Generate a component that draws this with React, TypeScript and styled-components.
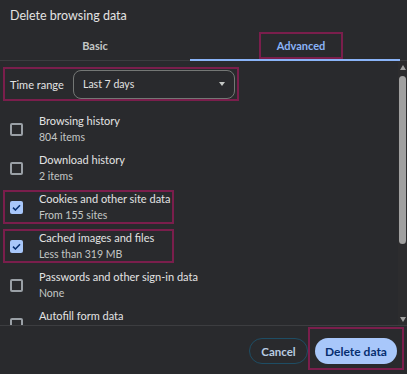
import styled, { createGlobalStyle } from "styled-components";

const GlobalStyle = createGlobalStyle`
  html, body {
    margin: 0;
    padding: 0;
    background: #292a2d;
  }
  body {
    font-family: Lato, "Noto Sans", sans-serif;
  }
`;

type Entry = {
  title: string;
  detail: string;
  checked: boolean;
  marked?: boolean;
};

const entries: Entry[] = [
  { title: "Browsing history", detail: "804 items", checked: false },
  { title: "Download history", detail: "2 items", checked: false },
  { title: "Cookies and other site data", detail: "From 155 sites", checked: true, marked: true },
  { title: "Cached images and files", detail: "Less than 319 MB", checked: true, marked: true },
  { title: "Passwords and other sign-in data", detail: "None", checked: false },
  { title: "Autofill form data", detail: "\u00a0", checked: false },
];

function CheckIcon() {
  return (
    <svg width="9" height="7" viewBox="0 0 9 7">
      <path d="M1 3.6 L3.4 6 L8 1.2" fill="none" stroke="#062e6f" strokeWidth="1.5" />
    </svg>
  );
}

export default function App() {
  return (
    <>
      <GlobalStyle />
      <Dialog>
        <Title>Delete browsing data</Title>
        <TabBar>
          <Tab>Basic</Tab>
          <Tab active>
            <Mark>Advanced</Mark>
          </Tab>
        </TabBar>
        <Body>
          <Content>
            <RangeRow>
              <RangeLabel>Time range</RangeLabel>
              <Select>
                <span>Last 7 days</span>
                <Caret />
              </Select>
            </RangeRow>
            <List>
              {entries.map((e) => (
                <Item key={e.title} marked={e.marked}>
                  <Box checked={e.checked}>{e.checked && <CheckIcon />}</Box>
                  <ItemText>
                    <ItemTitle>{e.title}</ItemTitle>
                    <ItemDetail>{e.detail}</ItemDetail>
                  </ItemText>
                </Item>
              ))}
            </List>
          </Content>
          <Scrollbar>
            <Arrow />
            <Thumb />
            <Spacer />
            <Arrow down />
          </Scrollbar>
        </Body>
        <Footer>
          <CancelButton>Cancel</CancelButton>
          <ButtonMark>
            <DeleteButton>Delete data</DeleteButton>
          </ButtonMark>
        </Footer>
      </Dialog>
    </>
  );
}

const maroon = "#7a1e4c";

const Dialog = styled.div`
  width: 407px;
  height: 374px;
  display: flex;
  flex-direction: column;
  background: #292a2d;
  overflow: hidden;
`;

const Title = styled.div`
  height: 30px;
  line-height: 31px;
  padding-left: 10px;
  font-size: 12.5px;
  color: #e3e3e3;
`;

const TabBar = styled.div`
  display: grid;
  grid-template-columns: 190px 210px;
  height: 30px;
  border-bottom: 1px solid #3c3d40;
`;

const Tab = styled.div<{ active?: boolean }>`
  display: flex;
  align-items: center;
  justify-content: center;
  padding-left: ${(p) => (p.active ? "12px" : "0")};
  font-size: 11px;
  font-weight: 700;
  color: ${(p) => (p.active ? "#8ab4f8" : "#c4c7c5")};
  border-bottom: 2px solid ${(p) => (p.active ? "#8ab4f8" : "transparent")};
  margin-bottom: -1px;
  padding-top: 1px;
`;

const Mark = styled.span`
  display: flex;
  align-items: center;
  justify-content: center;
  width: 80px;
  height: 23px;
  border: 2px solid ${maroon};
`;

const Body = styled.div`
  display: flex;
  height: 264px;
`;

const Content = styled.div`
  flex: 1;
  overflow: hidden;
`;

const RangeRow = styled.div`
  display: flex;
  align-items: center;
  justify-content: space-between;
  width: 225px;
  height: 30px;
  margin: 6px 0 0 3px;
  padding: 0 2px 0 5px;
  border: 2px solid ${maroon};
`;

const RangeLabel = styled.span`
  font-size: 11px;
  color: #e3e3e3;
`;

const Select = styled.div`
  display: flex;
  align-items: center;
  justify-content: space-between;
  box-sizing: border-box;
  width: 162px;
  height: 29px;
  padding: 0 9px 0 9px;
  border: 1px solid #747775;
  border-radius: 8px;
  font-size: 10.5px;
  color: #e3e3e3;
`;

const Caret = styled.span`
  width: 0;
  height: 0;
  border-left: 3.5px solid transparent;
  border-right: 3.5px solid transparent;
  border-top: 4px solid #c4c7c5;
`;

const List = styled.div`
  display: flex;
  flex-direction: column;
  margin-top: 9px;
`;

const Item = styled.div<{ marked?: boolean }>`
  display: flex;
  align-items: center;
  gap: 16px;
  box-sizing: border-box;
  width: ${(p) => (p.marked ? "171px" : "fit-content")};
  height: 34px;
  margin: 2px 0 3px 3px;
  padding: 0 6px 0 5px;
  border: 2px solid ${(p) => (p.marked ? maroon : "transparent")};
`;

const Box = styled.span<{ checked: boolean }>`
  display: flex;
  align-items: center;
  justify-content: center;
  flex-shrink: 0;
  box-sizing: border-box;
  width: 13px;
  height: 13px;
  border-radius: 2px;
  border: ${(p) => (p.checked ? "none" : "2px solid #9aa0a6")};
  background: ${(p) => (p.checked ? "#a8c7fa" : "transparent")};
`;

const ItemText = styled.div`
  display: flex;
  flex-direction: column;
  line-height: 17px;
  white-space: nowrap;
`;

const ItemTitle = styled.span`
  font-size: 11px;
  color: #e3e3e3;
`;

const ItemDetail = styled.span`
  font-size: 10.5px;
  color: #c4c7c5;
`;

const Scrollbar = styled.div`
  width: 9px;
  display: flex;
  flex-direction: column;
  align-items: center;
  padding-top: 2px;
  background: #2c2c2e;
`;

const Arrow = styled.span<{ down?: boolean }>`
  width: 0;
  height: 0;
  margin: 2px 0 3px;
  border-left: 3.5px solid transparent;
  border-right: 3.5px solid transparent;
  ${(p) =>
    p.down
      ? "border-top: 5px solid #a0a0a0;"
      : "border-bottom: 5px solid #a0a0a0;"}
`;

const Thumb = styled.span`
  width: 7px;
  height: 168px;
  border-radius: 4px;
  background: #a0a0a0;
  margin-top: 3px;
`;

const Spacer = styled.span`
  flex: 1;
`;

const Footer = styled.div`
  display: flex;
  align-items: flex-start;
  justify-content: flex-end;
  border-top: 1px solid #3c3d40;
  padding: 1px 3px 0 0;
  flex: 1;
`;

const CancelButton = styled.button`
  box-sizing: border-box;
  width: 59px;
  height: 26px;
  margin-top: 11px;
  border: 1px solid #1e4d64;
  border-radius: 13px;
  background: transparent;
  color: #b9cde2;
  font-family: inherit;
  font-size: 11.5px;
  font-weight: 700;
  padding: 0;
`;

const ButtonMark = styled.div`
  padding: 9px 5px 4px 5px;
  border: 2px solid ${maroon};
`;

const DeleteButton = styled.button`
  width: 82px;
  height: 26px;
  border: none;
  border-radius: 13px;
  background: #a8c7fa;
  color: #062e6f;
  font-family: inherit;
  font-size: 12px;
  font-weight: 700;
  padding: 0;
`;
